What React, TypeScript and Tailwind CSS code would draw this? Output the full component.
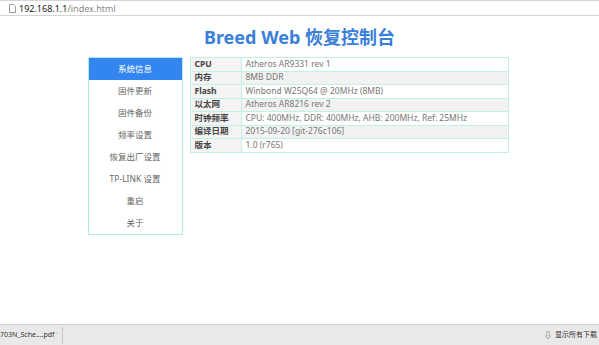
import React from "react";

const rows: [string, string][] = [
  ["CPU", "Atheros AR9331 rev 1"],
  ["内存", "8MB DDR"],
  ["Flash", "Winbond W25Q64 @ 20MHz (8MB)"],
  ["以太网", "Atheros AR8216 rev 2"],
  ["时钟频率", "CPU: 400MHz, DDR: 400MHz, AHB: 200MHz, Ref: 25MHz"],
  ["编译日期", "2015-09-20 [git-276c106]"],
  ["版本", "1.0 (r765)"],
];

const nav = ["系统信息", "固件更新", "固件备份", "频率设置", "恢复出厂设置", "TP-LINK 设置", "重启", "关于"];

export default function App() {
  return (
    <div
      className="w-[599px] h-[345px] bg-white flex flex-col overflow-hidden"
      style={{ fontFamily: '"Noto Sans", "Noto Sans CJK SC", sans-serif' }}
    >
      {/* address bar */}
      <div className="h-[16px] shrink-0 border-t border-b border-[#d4d4d4] flex items-center pl-[9px] bg-white">
        <svg width="7" height="9" viewBox="0 0 7 9" className="mr-[3px]">
          <path d="M0.5 0.5 H4.5 L6.5 2.5 V8.5 H0.5 Z" fill="none" stroke="#9a9a9a" strokeWidth="1" />
        </svg>
        <span className="text-[9px] leading-none text-[#222]">192.168.1.1</span>
        <span className="text-[9px] leading-none text-[#888]">/index.html</span>
      </div>

      {/* page */}
      <div className="flex-1 flex flex-col items-center">
        <h1 className="mt-[7px] h-[28px] text-[18px] leading-[28px] font-bold text-[#3a80d8]">
          Breed Web 恢复控制台
        </h1>
        <div className="mt-[6px] ml-[-3px] flex gap-[7px] items-start">
          <div className="w-[95px] border border-[#b0efdd] flex flex-col">
            {nav.map((n, i) => (
              <div
                key={n}
                className={
                  "h-[22px] flex items-center justify-center text-[8.5px] " +
                  (i === 0 ? "bg-[#3386ef] text-white" : "text-[#666]")
                }
              >
                {n}
              </div>
            ))}
          </div>
          <div className="w-[319px] border-l border-r border-b border-[#c0f1e3]">
            {rows.map(([k, v], i) => (
              <div
                key={k}
                className={
                  "flex h-[13.5px] border-t border-[#c0f1e3] " + (i % 2 === 1 ? "bg-[#f2f2f2]" : "bg-white")
                }
              >
                <div className="w-[51px] shrink-0 border-r border-[#c0f1e3] pl-[4px] flex items-center text-[8.5px] font-bold text-[#444] bg-[#f4f4f4]">
                  {k}
                </div>
                <div className="flex-1 pl-[4px] flex items-center text-[8.5px] text-[#777] whitespace-nowrap">
                  {v}
                </div>
              </div>
            ))}
          </div>
        </div>
      </div>

      {/* download bar */}
      <div className="h-[21px] shrink-0 border-t border-[#cfcfcf] bg-[#e9e9e9] flex items-center">
        <span className="text-[7px] text-[#333] whitespace-nowrap w-[56px] overflow-hidden">703N_Sche....pdf</span>
        <span className="text-[6px] text-[#777] w-[6px]">˄</span>
        <div className="w-px h-[17px] bg-[#c8c8c8]" />
        <div className="flex-1" />
        <span className="text-[8px] text-[#444] mr-[3px]">⇩</span>
        <span className="text-[7px] text-[#333] whitespace-nowrap pr-[2px]">显示所有下载</span>
      </div>
    </div>
  );
}
